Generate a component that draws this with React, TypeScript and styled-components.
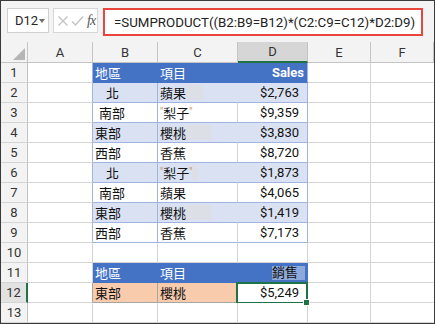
import React from "react";
import styled, { createGlobalStyle } from "styled-components";

const GRID = "#d4d4d4";
const HEAD_LINE = "#c4c4c4";
const TABLE_LINE = "#9fb5e0";
const BLUE = "#4472c4";
const BAND = "#d9e1f2";
const ORANGE = "#f8cbad";
const GREEN = "#217346";

const GlobalStyle = createGlobalStyle`
  html, body {
    margin: 0;
    padding: 0;
    background: #ffffff;
  }
  body {
    font-family: Roboto, "Noto Sans CJK TC", sans-serif;
  }
`;

const Frame = styled.div`
  width: 435px;
  height: 324px;
  box-sizing: border-box;
  border: 1px solid #3a3a3a;
  display: flex;
  flex-direction: column;
  overflow: hidden;
  background: #fff;
`;

const Toolbar = styled.div`
  flex: none;
  height: 41px;
  box-sizing: border-box;
  padding: 7px 0 0 6px;
  background: #f3f3f3;
  display: flex;
  align-items: flex-start;
`;

const NameBox = styled.div`
  width: 42px;
  height: 25px;
  box-sizing: border-box;
  border: 1px solid #d0d0d0;
  background: #fff;
  display: flex;
  align-items: center;
  padding-left: 7px;
  font-size: 13px;
  color: #262626;
  position: relative;
`;

const DropArrow = styled.span`
  position: absolute;
  right: 3px;
  top: 10px;
  width: 0;
  height: 0;
  border-left: 3px solid transparent;
  border-right: 3px solid transparent;
  border-top: 4px solid #6e6e6e;
`;

const ActionBox = styled.div`
  width: 45px;
  height: 25px;
  margin-left: 4px;
  box-sizing: border-box;
  border: 1px solid #d6d6d6;
  background: #fff;
  display: flex;
  align-items: center;
  padding-left: 3px;
  gap: 2px;
`;

const Fx = styled.span`
  font-family: "Liberation Serif", serif;
  font-style: italic;
  font-size: 14px;
  color: #555;
  margin-left: 1px;
  letter-spacing: -1px;
`;

const FormulaBox = styled.div`
  width: 320px;
  height: 28px;
  margin-left: 5px;
  box-sizing: border-box;
  border: 2px solid #e8453c;
  background: #fff;
  display: flex;
  align-items: center;
  padding-left: 9px;
  font-size: 13.3px;
  color: #222;
  white-space: nowrap;
`;

const Sheet = styled.div`
  flex: 1;
  display: grid;
  grid-template-columns: 27px 65px 65px 80px 70px 63px 1fr;
  grid-template-rows: 21px repeat(13, 20px);
`;

const Corner = styled.div`
  box-sizing: border-box;
  background: #f3f3f3;
  border-right: 1px solid ${HEAD_LINE};
  border-bottom: 1px solid ${HEAD_LINE};
  display: flex;
  align-items: flex-end;
  justify-content: flex-end;
  padding: 0 2px 2px 0;
`;

const ColHead = styled.div<{ $active?: boolean }>`
  box-sizing: border-box;
  background: ${(p) => (p.$active ? "#d6d6d6" : "#f3f3f3")};
  border-right: 1px solid ${HEAD_LINE};
  border-bottom: ${(p) => (p.$active ? `2px solid ${GREEN}` : `1px solid ${HEAD_LINE}`)};
  display: flex;
  align-items: center;
  justify-content: center;
  font-size: 13px;
  color: #333;
`;

const RowHead = styled.div<{ $active?: boolean }>`
  box-sizing: border-box;
  background: ${(p) => (p.$active ? "#e2e2e2" : "#f3f3f3")};
  border-right: ${(p) => (p.$active ? `2px solid ${GREEN}` : `1px solid ${HEAD_LINE}`)};
  border-bottom: 1px solid ${GRID};
  display: flex;
  align-items: center;
  justify-content: center;
  font-size: 13px;
  color: #333;
`;

const Cell = styled.div<{
  $bg?: string;
  $right?: string;
  $bottom?: string;
  $align?: "left" | "right";
  $pl?: number;
  $pr?: number;
  $color?: string;
  $bold?: boolean;
}>`
  box-sizing: border-box;
  position: relative;
  background: ${(p) => p.$bg || "#fff"};
  border-right: 1px solid ${(p) => p.$right || GRID};
  border-bottom: 1px solid ${(p) => p.$bottom || GRID};
  display: flex;
  align-items: center;
  justify-content: ${(p) => (p.$align === "right" ? "flex-end" : "flex-start")};
  padding-left: ${(p) => p.$pl ?? 2}px;
  padding-right: ${(p) => p.$pr ?? 3}px;
  font-size: 13px;
  color: ${(p) => p.$color || "#111"};
  font-weight: ${(p) => (p.$bold ? 700 : 400)};
  white-space: nowrap;
  overflow: hidden;
`;

const Selected = styled(Cell)`
  overflow: visible;
  &::after {
    content: "";
    position: absolute;
    left: -2px;
    top: -1px;
    right: -1px;
    bottom: -2px;
    border: 2px solid ${GREEN};
    pointer-events: none;
  }
`;

const Handle = styled.span`
  position: absolute;
  right: -3px;
  bottom: -4px;
  width: 5px;
  height: 5px;
  background: ${GREEN};
  border: 1px solid #fff;
  z-index: 2;
`;

const Patch = styled.span<{ $w: number; $bg?: string }>`
  display: inline-block;
  width: ${(p) => p.$w}px;
  height: 15px;
  background: ${(p) => p.$bg || "#dcdfe6"};
`;

const Highlight = styled.span`
  background: #8eaadb;
  color: #111;
  padding: 0 7px 0 0;
  line-height: 14px;
`;

const Quote = styled.span`
  font-size: 10px;
  color: #c8955a;
  align-self: flex-start;
  margin-top: 3px;
`;

type Row = {
  b: string;
  bPad?: number;
  c: string;
  quoted?: boolean;
  patch?: number;
  d: string;
  band?: boolean;
};

const rows: Row[] = [
  { b: "北", bPad: 13, c: "蘋果", patch: 17, d: "$2,763", band: true },
  { b: "南部", bPad: 6, c: "梨子", quoted: true, d: "$9,359" },
  { b: "東部", c: "櫻桃", patch: 25, d: "$3,830", band: true },
  { b: "西部", c: "香蕉", d: "$8,720" },
  { b: "北", bPad: 13, c: "梨子", quoted: true, patch: 6, d: "$1,873", band: true },
  { b: "南部", bPad: 6, c: "蘋果", d: "$4,065" },
  { b: "東部", c: "櫻桃", patch: 25, d: "$1,419", band: true },
  { b: "西部", c: "香蕉", d: "$7,173" },
];

const columns = ["A", "B", "C", "D", "E", "F"];

const CrossIcon = () => (
  <svg width="12" height="12" viewBox="0 0 12 12">
    <path d="M1.5 1.5 L10.5 10.5 M10.5 1.5 L1.5 10.5" stroke="#c4c4c4" strokeWidth="1.4" fill="none" />
  </svg>
);

const CheckIcon = () => (
  <svg width="13" height="12" viewBox="0 0 13 12">
    <path d="M1 6.5 L4.5 10 L12 1.5" stroke="#c4c4c4" strokeWidth="1.5" fill="none" />
  </svg>
);

const CornerMark = () => (
  <svg width="12" height="12" viewBox="0 0 12 12">
    <polygon points="12,0 12,12 0,12" fill="#b5b5b5" />
  </svg>
);

const Blank = ({ last }: { last?: boolean }) => <Cell $right={last ? "#fff" : GRID} />;

export default function App() {
  return (
    <Frame>
      <GlobalStyle />
      <Toolbar>
        <NameBox>
          D12
          <DropArrow />
        </NameBox>
        <ActionBox>
          <CrossIcon />
          <CheckIcon />
          <Fx>fx</Fx>
        </ActionBox>
        <FormulaBox>=SUMPRODUCT((B2:B9=B12)*(C2:C9=C12)*D2:D9)</FormulaBox>
      </Toolbar>

      <Sheet>
        <Corner>
          <CornerMark />
        </Corner>
        {columns.map((c) => (
          <ColHead key={c} $active={c === "D"}>
            {c}
          </ColHead>
        ))}

        {/* row 1: table header */}
        <RowHead>1</RowHead>
        <Cell $right={TABLE_LINE} />
        <Cell $bg={BLUE} $right={BLUE} $bottom={BLUE} $color="#fff">
          地區
        </Cell>
        <Cell $bg={BLUE} $right={BLUE} $bottom={BLUE} $color="#fff">
          項目
        </Cell>
        <Cell $bg={BLUE} $right={TABLE_LINE} $bottom={BLUE} $color="#fff" $align="right" $bold>
          Sales
        </Cell>
        <Blank />
        <Blank last />

        {rows.map((r, i) => {
          const bg = r.band ? BAND : "#fff";
          return (
            <React.Fragment key={i}>
              <RowHead>{i + 2}</RowHead>
              <Cell $right={TABLE_LINE} />
              <Cell $bg={bg} $right={TABLE_LINE} $bottom={TABLE_LINE} $pl={r.bPad ?? 2}>
                {r.b}
              </Cell>
              <Cell $bg={bg} $right={r.band ? BAND : GRID} $bottom={TABLE_LINE}>
                {r.quoted && <Quote>"</Quote>}
                {r.c}
                {r.quoted && <Quote>"</Quote>}
                {r.patch && <Patch $w={r.patch} />}
              </Cell>
              <Cell $bg={bg} $right={TABLE_LINE} $bottom={TABLE_LINE} $align="right" $pr={8}>
                {r.d}
              </Cell>
              <Blank />
              <Blank last />
            </React.Fragment>
          );
        })}

        {/* row 10 */}
        <RowHead>10</RowHead>
        <Blank />
        <Blank />
        <Blank />
        <Blank />
        <Blank />
        <Blank last />

        {/* row 11: criteria header */}
        <RowHead>11</RowHead>
        <Blank />
        <Cell $bg={BLUE} $right={BLUE} $bottom={BLUE} $color="#fff">
          地區
        </Cell>
        <Cell $bg={BLUE} $right={BLUE} $bottom={BLUE} $color="#fff">
          項目
        </Cell>
        <Cell $bg={BLUE} $right={BLUE} $bottom={BLUE} $align="right" $pr={2}>
          <Highlight>銷售</Highlight>
        </Cell>
        <Blank />
        <Blank last />

        {/* row 12: criteria + result */}
        <RowHead $active>12</RowHead>
        <Cell $right="#a6a6a6" />
        <Cell $bg={ORANGE} $right="#a6a6a6" $bottom="#a6a6a6">
          東部
        </Cell>
        <Cell $bg={ORANGE} $right="#a6a6a6" $bottom="#a6a6a6">
          櫻桃
        </Cell>
        <Selected $align="right" $pr={8}>
          $5,249
          <Handle />
        </Selected>
        <Blank />
        <Blank last />

        {/* row 13 */}
        <RowHead>13</RowHead>
        <Blank />
        <Blank />
        <Blank />
        <Blank />
        <Blank />
        <Blank last />
      </Sheet>
    </Frame>
  );
}
